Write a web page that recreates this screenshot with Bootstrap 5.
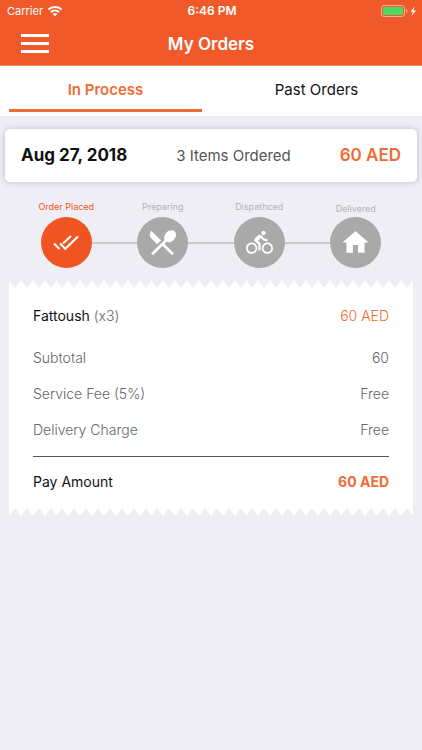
<!DOCTYPE html>
<html lang="en">
<head>
<meta charset="utf-8">
<meta name="viewport" content="width=device-width, initial-scale=1">
<title>My Orders</title>
<link href="https://cdn.jsdelivr.net/npm/bootstrap@5.3.0/dist/css/bootstrap.min.css" rel="stylesheet">
<style>
  :root { --brand: #f05a2a; --accent: #ee6c33; --page: #efeef5; --muted: #666; --idle: #a9a9a9; }
  body { font-family: Inter, "Liberation Sans", sans-serif; font-size: 14px; line-height: 20px; background: var(--page); color: #111; }
  .app-top { background: var(--brand); color: #fff; border-bottom: 1px solid #f28a60; }
  .status-bar { height: 22px; font-size: 11px; grid-template-columns: 1fr auto 1fr; padding: 0 5px 0 7px; }
  .status-bar .clock { font-size: 12px; }
  .title-bar { height: 43px; grid-template-columns: 1fr auto 1fr; padding: 0 21px; }
  .title-bar h1 { font-size: 17px; line-height: 24px; font-weight: 600; }
  .menu-btn { line-height: 0; }
  .tabs .nav-link { color: #111; height: 46px; margin: 0 9px; padding: 14px 0; font-size: 15px; border-bottom: 3px solid transparent; border-radius: 0; }
  .tabs .nav-link.active { color: var(--accent); font-weight: 600; border-color: var(--accent); }
  .tabs { padding-bottom: 4px; }
  .accent { color: var(--accent); }
  .order-card { margin: 13px 5px 0; padding: 14px 16px; border-radius: 5px; box-shadow: 0 0 6px rgba(60, 60, 90, .28); font-size: 17px; line-height: 25px; }
  .order-card .count { font-size: 15px; color: #555; }
  .steps { margin: 16px 18px 0; }
  .step { color: var(--idle); }
  .step-name { font-size: 9px; line-height: 14px; height: 19px; padding-top: 2px; color: #b3b3b8; }
  .step.late .step-name { padding-top: 4px; }
  .step-dot { width: 51px; height: 51px; background: var(--idle); }
  .step.done .step-dot { background: #f05423; }
  .step.done .step-name { color: #f05423; }
  .step-track { height: 2px; background: #c8c8cd; }
  .step:first-child .step-track:first-child, .step:last-child .step-track:last-child { visibility: hidden; }
  .receipt { margin: 12px 9px 0; }
  .edge { height: 8px; background-size: 12px 8px; background-repeat: round no-repeat; }
  .edge-top { background-image: url("data:image/svg+xml,%3Csvg xmlns='http://www.w3.org/2000/svg' viewBox='0 0 12 8' preserveAspectRatio='none'%3E%3Cpath d='M0 0L6 8L12 0V8H0Z' fill='white'/%3E%3C/svg%3E"); }
  .edge-bottom { background-image: url("data:image/svg+xml,%3Csvg xmlns='http://www.w3.org/2000/svg' viewBox='0 0 12 8' preserveAspectRatio='none'%3E%3Cpath d='M0 0H12V8L6 0L0 8Z' fill='white'/%3E%3C/svg%3E"); }
  .receipt-body { padding: 18px 24px 16px; color: var(--muted); }
  .receipt-body dt, .receipt-body dd { font-weight: 300; margin: 0; }
  .receipt-body .line { margin-bottom: 16px; }
  .receipt-body .item { margin-bottom: 22px; }
  .receipt-body .total { border-top: 1px solid #555; padding-top: 15px; }
  .receipt-body .ink { color: #111; font-weight: 400; }
</style>
</head>
<body>
<header class="app-top">
  <div class="status-bar d-grid align-items-center">
    <div class="d-flex align-items-center gap-1">
      <span>Carrier</span>
      <svg width="16" height="12" viewBox="0 0 16 12" fill="none" stroke="#fff" stroke-width="2" aria-hidden="true"><path d="M1.4 4.6C5.2 1.2 10.800 1.200 14.600 4.600M3.900 7.100C6.300 5 9.700 5 12.100 7.100"/><path d="M5.700 9Q8 7.200 10.300 9L8 11.300Z" fill="#fff" stroke="none"/></svg>
    </div>
    <span class="clock fw-semibold">6:46 PM</span>
    <svg class="ms-auto" width="36" height="12" viewBox="0 0 36 12" aria-hidden="true"><rect x=".5" y=".5" width="23" height="11" rx="2.500" fill="none" stroke="#f9ad8d"/><rect x="2" y="2" width="20" height="8" rx="1" fill="#4cd964"/><path d="M25 4q1.500 .5 1.500 2T25 8z" fill="#f9ad8d"/><path d="M33.500 1.500 29.500 6.700h2.400L30.500 11l4.500-5.500h-2.500z" fill="#fff"/></svg>
  </div>
  <div class="title-bar d-grid align-items-center">
    <button class="menu-btn btn p-0 border-0 me-auto" type="button" aria-label="Menu">
      <svg width="28" height="20" viewBox="0 0 28 20" fill="#fff" aria-hidden="true"><path d="M0 0h28v3H0zM0 8h28v3H0zM0 16h28v3H0z"/></svg>
    </button>
    <h1 class="m-0">My Orders</h1>
  </div>
</header>
<nav class="tabs bg-white row g-0 text-center" aria-label="Orders">
  <div class="col"><a class="nav-link active" aria-current="page" href="#in-process">In Process</a></div>
  <div class="col"><a class="nav-link" href="#past">Past Orders</a></div>
</nav>
<main id="in-process">
  <section class="order-card bg-white d-flex justify-content-between align-items-center">
    <strong class="fw-bold">Aug 27, 2018</strong>
    <span class="count">3 Items Ordered</span>
    <strong class="fw-semibold accent">60 AED</strong>
  </section>

  <ol class="steps row g-0 list-unstyled mb-0 text-center">
    <li class="step done col">
      <div class="step-name">Order Placed</div>
      <div class="d-flex align-items-center"><span class="step-track flex-fill"></span>
        <span class="step-dot rounded-circle d-flex align-items-center justify-content-center"><svg width="28" height="28" viewBox="0 0 28 28" fill="none" stroke="#fff" stroke-width="2" aria-hidden="true"><path d="M2 14.500l5.500 5.500M8 14.500l5.300 5.300L26 7.500M11 14.500l8-7.500"/></svg></span>
        <span class="step-track flex-fill"></span></div>
    </li>
    <li class="step col">
      <div class="step-name">Preparing</div>
      <div class="d-flex align-items-center"><span class="step-track flex-fill"></span>
        <span class="step-dot rounded-circle d-flex align-items-center justify-content-center"><svg width="33" height="33" viewBox="0 0 24 24" fill="#fff" aria-hidden="true"><path d="M8.100 13.340l2.830-2.830L3.910 3.500c-1.560 1.560-1.560 4.090 0 5.660l4.190 4.180zm6.780-1.810c1.530.71 3.680.21 5.270-1.380 1.910-1.910 2.280-4.650.81-6.120-1.460-1.460-4.200-1.100-6.120.81-1.590 1.590-2.090 3.740-1.380 5.270L3.700 19.870l1.410 1.410L12 14.410l6.880 6.880 1.410-1.410L13.410 13l1.470-1.470z"/></svg></span>
        <span class="step-track flex-fill"></span></div>
    </li>
    <li class="step col">
      <div class="step-name">Dispathced</div>
      <div class="d-flex align-items-center"><span class="step-track flex-fill"></span>
        <span class="step-dot rounded-circle d-flex align-items-center justify-content-center"><svg width="27" height="27" viewBox="0 0 24 24" fill="#fff" aria-hidden="true"><path d="M15.500 5.500c1.100 0 2-.9 2-2s-.9-2-2-2-2 .9-2 2 .9 2 2 2zM5 12c-2.800 0-5 2.200-5 5s2.200 5 5 5 5-2.200 5-5-2.200-5-5-5zm0 8.500c-1.900 0-3.500-1.600-3.500-3.500s1.600-3.500 3.500-3.500 3.500 1.600 3.500 3.500-1.600 3.500-3.500 3.500zm5.800-10l2.400-2.400.8.800c1.300 1.300 3 2.100 5.100 2.100V9c-1.500 0-2.700-.6-3.600-1.500l-1.900-1.900c-.5-.4-1-.6-1.600-.6s-1.100.2-1.400.6L7.800 8.400c-.4.4-.6.9-.6 1.400 0 .6.200 1.100.6 1.400L11 14v5h2v-6.200l-2.200-2.300zM19 12c-2.800 0-5 2.200-5 5s2.200 5 5 5 5-2.200 5-5-2.200-5-5-5zm0 8.500c-1.900 0-3.500-1.600-3.500-3.500s1.600-3.500 3.500-3.500 3.500 1.600 3.500 3.500-1.600 3.500-3.500 3.500z"/></svg></span>
        <span class="step-track flex-fill"></span></div>
    </li>
    <li class="step late col">
      <div class="step-name">Delivered</div>
      <div class="d-flex align-items-center"><span class="step-track flex-fill"></span>
        <span class="step-dot rounded-circle d-flex align-items-center justify-content-center"><svg width="31" height="31" viewBox="0 0 24 24" fill="#fff" aria-hidden="true"><path d="M10 20v-6h4v6h5v-8h3L12 3 2 12h3v8z"/></svg></span>
        <span class="step-track flex-fill"></span></div>
    </li>
  </ol>

  <section class="receipt">
    <div class="edge edge-top"></div>
    <dl class="receipt-body bg-white mb-0">
      <div class="item d-flex justify-content-between"><dt><span class="ink">Fattoush</span> (x3)</dt><dd class="accent">60 AED</dd></div>
      <div class="line d-flex justify-content-between"><dt>Subtotal</dt><dd>60</dd></div>
      <div class="line d-flex justify-content-between"><dt>Service Fee (5%)</dt><dd>Free</dd></div>
      <div class="line d-flex justify-content-between"><dt>Delivery Charge</dt><dd>Free</dd></div>
      <div class="total d-flex justify-content-between"><dt class="ink">Pay Amount</dt><dd class="accent"><strong class="fw-bold">60 AED</strong></dd></div>
    </dl>
    <div class="edge edge-bottom"></div>
  </section>
</main>
<script src="https://cdn.jsdelivr.net/npm/bootstrap@5.3.0/dist/js/bootstrap.bundle.min.js"></script>
</body>
</html>
